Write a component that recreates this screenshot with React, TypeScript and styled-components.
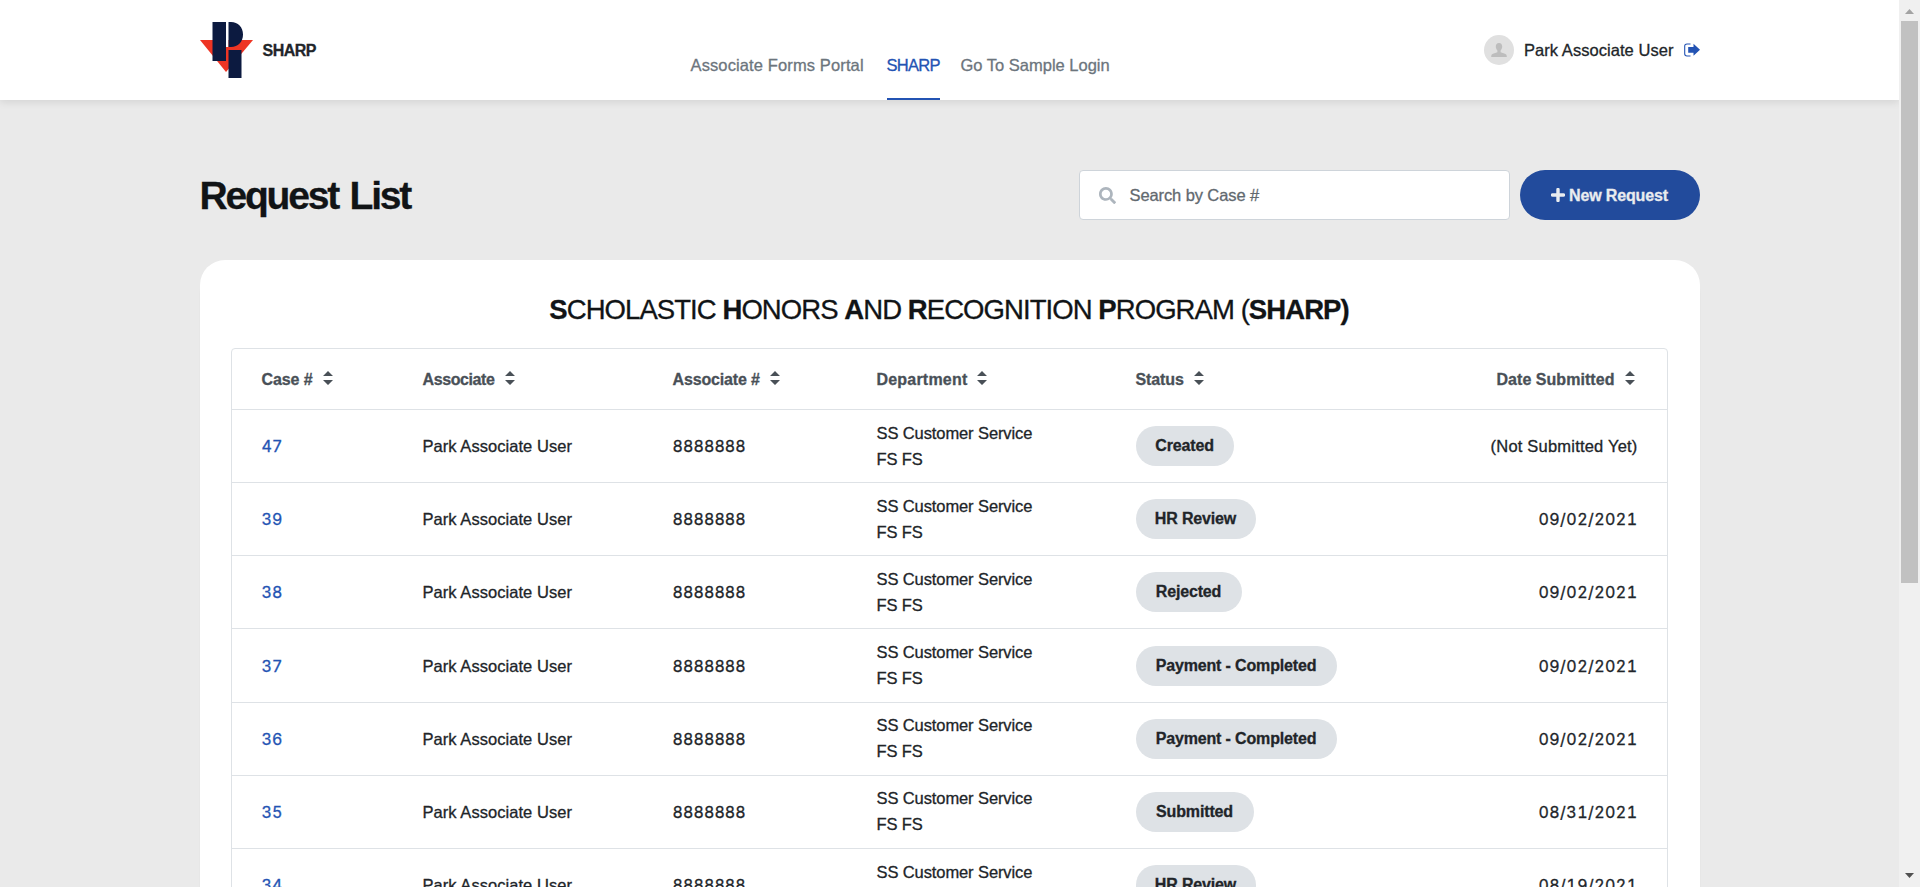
import React from 'react';
import styled, { createGlobalStyle } from 'styled-components';
import { FaSearch } from 'react-icons/fa';

const GlobalStyle = createGlobalStyle`
  * { box-sizing: border-box; }
  body {
    margin: 0;
    overflow: hidden;
    background: #eaeaea;
    color: #212529;
    font-family: 'Liberation Sans', Arial, sans-serif;
    font-size: 16.5px;
    line-height: 26px;
    -webkit-text-stroke: 0.3px currentColor;
  }
`;

const Viewport = styled.div`
  display: flex;
  width: 1920px;
  height: 887px;
  overflow: hidden;
`;

const Page = styled.div`
  flex: 1;
  min-width: 0;
  overflow: hidden;
`;

const Container = styled.div`
  width: 1500px;
  margin: 0 auto;
`;

const Text = styled.span<{ $track?: number; $drop?: number }>`
  white-space: nowrap;
  padding-top: ${(p) => p.$drop ?? 2}px;
  letter-spacing: ${(p) => p.$track ?? 0}px;
`;

const Header = styled.header`
  height: 100px;
  background: #fff;
  box-shadow: 0 2px 8px rgba(0, 0, 0, 0.1);
`;

const HeaderRow = styled(Container)`
  display: grid;
  grid-template-columns: 491px 1fr auto;
  align-items: center;
  height: 100px;
`;

const Brand = styled.a`
  display: flex;
  align-items: center;
  gap: 10px;
  font-size: 16px;
  font-weight: 700;
`;

const Nav = styled.nav`
  display: flex;
  height: 100px;
`;

const NavLink = styled.a<{ $active?: boolean; $width: number }>`
  display: flex;
  width: ${(p) => p.$width}px;
  margin-right: ${(p) => (p.$active ? 21 : 22)}px;
  padding-top: 50px;
  color: ${(p) => (p.$active ? '#2353b3' : '#6c757d')};
  border-bottom: 2px solid ${(p) => (p.$active ? '#2353b3' : 'transparent')};
`;

const UserBox = styled.div`
  display: flex;
  align-items: center;
  gap: 10px;
`;

const TitleRow = styled(Container)`
  display: flex;
  align-items: center;
  height: 50px;
  margin-top: 70px;
`;

const PageTitle = styled.h1`
  flex: 1;
  margin: 0;
  padding-top: 2px;
  color: #111416;
  font-size: 39px;
  line-height: 50px;
  letter-spacing: -2.2px;
  word-spacing: 3px;
`;

const SearchBox = styled.div`
  display: flex;
  align-items: center;
  gap: 14px;
  width: 431px;
  height: 50px;
  padding-left: 19px;
  color: #62696f;
  background: #fff;
  border: 1px solid #ced4da;
  border-radius: 4px;

  svg { color: #adb5bd; }
`;

const NewButton = styled.button`
  display: flex;
  align-items: center;
  justify-content: center;
  gap: 4px;
  width: 180px;
  height: 50px;
  margin-left: 10px;
  padding: 0;
  border: 0;
  border-radius: 25px;
  color: #e9ecef;
  background: #224b9c;
  font: 700 16px 'Liberation Sans', Arial, sans-serif;
`;

const Card = styled(Container)`
  height: 900px;
  margin-top: 40px;
  padding: 32px 32px 0 31px;
  background: #fff;
  border-radius: 25px;
  box-shadow: 0 10px 1px rgba(0, 0, 0, 0.14);
`;

const CardTitle = styled.h2`
  margin: 0;
  color: #111416;
  font-size: 27.5px;
  font-weight: 400;
  line-height: 36px;
  text-align: center;
  white-space: nowrap;
  letter-spacing: -0.93px;
`;

const Table = styled.div`
  margin-top: 20px;
  border: 1px solid #dee2e6;
  border-radius: 4px;
`;

const Row = styled.div`
  display: grid;
  grid-template-columns: 161px 250px 204px 259px 200px 1fr;
  align-items: center;
  height: 73.17px;
  padding: 0 29px 0 30px;
  border-top: 1px solid #dee2e6;
`;

const HeadRow = styled(Row)`
  height: 60px;
  border-top: 0;
  color: #495057;
  font-size: 16px;
  font-weight: 700;
`;

const HeadCell = styled.div<{ $end?: boolean }>`
  display: flex;
  align-items: center;
  gap: 10px;
  justify-content: ${(p) => (p.$end ? 'flex-end' : 'flex-start')};
  padding-right: ${(p) => (p.$end ? 3 : 0)}px;
`;

const Cell = styled.div<{ $end?: boolean }>`
  text-align: ${(p) => (p.$end ? 'right' : 'left')};
  white-space: nowrap;
`;

const Digits = styled.span<{ $track?: number }>`
  font-family: Inter, 'Liberation Sans', sans-serif;
  font-size: 16px;
  font-feature-settings: 'tnum' 1;
  letter-spacing: ${(p) => p.$track ?? 0}px;
`;

const CaseLink = styled(Digits)`
  color: #2353b3;
`;

const Dept = styled.div`
  margin-top: -1px;
  letter-spacing: -0.1px;
  white-space: nowrap;
`;

const Badge = styled.span<{ $width: number }>`
  display: flex;
  align-items: center;
  justify-content: center;
  width: ${(p) => p.$width}px;
  height: 40px;
  border-radius: 20px;
  background: #dee2e6;
  font-size: 16px;
  font-weight: 700;
  letter-spacing: -0.15px;
  white-space: nowrap;
`;

const ScrollTrack = styled.div`
  display: flex;
  flex-direction: column;
  align-items: center;
  justify-content: space-between;
  width: 21px;
  height: 887px;
  background: #f0f0f0;
`;

const ScrollThumb = styled.div`
  width: 17px;
  height: 562px;
  margin-bottom: auto;
  background: #c1c1c1;
`;

const ScrollArrow = styled.svg`
  display: block;
  width: 21px;
  height: 21px;
`;

const SortGlyph = styled.svg`
  width: 10px;
  height: 14px;
  margin-top: -2px;
`;

const Logo = () => (
  <svg width="53" height="56" viewBox="0 0 53 56">
    <path d="M0 18H53L26 50Z" fill="#ee3524" />
    <path d="M26 0H28.5V25H26Z" fill="#fff" />
    <path d="M12.5 0H26V39H12.5ZM28.5 0H31C38 0 43 5 43 12.5S38 25 31 25H28.5ZM28.5 28H41.5V56H28.5Z" fill="#0c1a40" />
  </svg>
);

const Avatar = () => (
  <svg width="30" height="30" viewBox="0 0 30 30">
    <circle cx="15" cy="15" r="15" fill="#e0e0e0" />
    <path d="M15 8C12.8 8 11.8 9.6 11.8 11.5C11.8 13.3 12.6 14.6 13.4 15.4V17.2L9 18.8C7.7 19.3 7.2 20 7.2 22H22.8C22.8 20 22.3 19.3 21 18.8L16.6 17.2V15.4C17.4 14.6 18.2 13.3 18.2 11.5C18.2 9.6 17.2 8 15 8Z" fill="#bdbdbd" />
  </svg>
);

const LogoutIcon = () => (
  <svg width="16" height="14" viewBox="0 0 16 14">
    <path d="M6.5 1H3Q.7 1 .7 3.2V10.8Q.7 13 3 13H6.5" fill="none" stroke="#2353b3" strokeWidth="1.1" />
    <path d="M4.2 4H9.5V.7L16 6.8L9.5 12.7V9.7H4.2Z" fill="#2353b3" />
  </svg>
);

const PlusIcon = () => (
  <svg width="14" height="14" viewBox="0 0 14 14">
    <path d="M7 1.5V12.5M1.5 7H12.5" stroke="currentColor" strokeWidth="3.4" strokeLinecap="round" />
  </svg>
);

const SortIcon = () => (
  <SortGlyph viewBox="0 0 10 14">
    <path d="M0 5L5 0L10 5ZM0 9H10L5 14Z" fill="#495057" />
  </SortGlyph>
);

const columns: { label: string; track: number }[] = [
  { label: 'Case #', track: -0.1 },
  { label: 'Associate', track: -0.4 },
  { label: 'Associate #', track: -0.15 },
  { label: 'Department', track: 0.2 },
  { label: 'Status', track: -0.1 },
  { label: 'Date Submitted', track: 0.05 },
];

const rows: { id: string; status: string; width: number; date?: string }[] = [
  { id: '47', status: 'Created', width: 98 },
  { id: '39', status: 'HR Review', width: 120, date: '09/02/2021' },
  { id: '38', status: 'Rejected', width: 106, date: '09/02/2021' },
  { id: '37', status: 'Payment - Completed', width: 201, date: '09/02/2021' },
  { id: '36', status: 'Payment - Completed', width: 201, date: '09/02/2021' },
  { id: '35', status: 'Submitted', width: 118, date: '08/31/2021' },
  { id: '34', status: 'HR Review', width: 120, date: '08/19/2021' },
];

export default function App() {
  return (
    <Viewport>
      <GlobalStyle />
      <Page>
        <Header>
          <HeaderRow>
            <Brand>
              <Logo />
              <Text $track={-0.5}>SHARP</Text>
            </Brand>
            <Nav>
              <NavLink $width={174}><Text $track={0.12}>Associate Forms Portal</Text></NavLink>
              <NavLink $width={53} $active><Text $track={-0.7}>SHARP</Text></NavLink>
              <NavLink $width={150}><Text>Go To Sample Login</Text></NavLink>
            </Nav>
            <UserBox>
              <Avatar />
              <Text $track={0.05} $drop={0}>Park Associate User</Text>
              <LogoutIcon />
            </UserBox>
          </HeaderRow>
        </Header>
        <TitleRow>
          <PageTitle>Request List</PageTitle>
          <SearchBox>
            <FaSearch size={17} />
            <Text $track={-0.1} $drop={0}>Search by Case #</Text>
          </SearchBox>
          <NewButton>
            <PlusIcon />
            <Text $track={-0.15}>New Request</Text>
          </NewButton>
        </TitleRow>
        <Card>
          <CardTitle>
            <b>S</b>CHOLASTIC <b>H</b>ONORS <b>A</b>ND <b>R</b>ECOGNITION <b>P</b>ROGRAM (<b>SHARP)</b>
          </CardTitle>
          <Table>
            <HeadRow>
              {columns.map((c, i) => (
                <HeadCell key={c.label} $end={i === 5}>
                  <Text $track={c.track}>{c.label}</Text>
                  <SortIcon />
                </HeadCell>
              ))}
            </HeadRow>
            {rows.map((r) => (
              <Row key={r.id}>
                <Cell><CaseLink $track={0.2}>{r.id}</CaseLink></Cell>
                <Cell><Text $track={0.05}>Park Associate User</Text></Cell>
                <Cell><Digits $track={0.1}>8888888</Digits></Cell>
                <Dept>SS Customer Service<br />FS FS</Dept>
                <Badge $width={r.width}>{r.status}</Badge>
                <Cell $end>
                  {r.date ? <Digits $track={0.45}>{r.date}</Digits> : <Text $track={0.2}>(Not Submitted Yet)</Text>}
                </Cell>
              </Row>
            ))}
          </Table>
        </Card>
      </Page>
      <ScrollTrack>
        <ScrollArrow viewBox="0 0 21 21"><path d="M6 14H15L10.5 9Z" fill="#a3a3a3" /></ScrollArrow>
        <ScrollThumb />
        <ScrollArrow viewBox="0 0 21 21"><path d="M6 7H15L10.5 12Z" fill="#505050" /></ScrollArrow>
      </ScrollTrack>
    </Viewport>
  );
}
